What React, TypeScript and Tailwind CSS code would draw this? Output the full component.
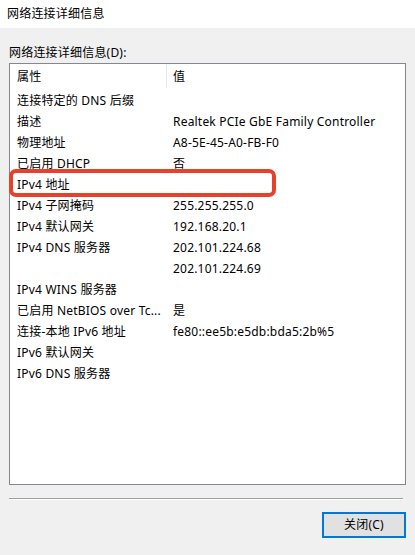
const rows: [string, string][] = [
  ['连接特定的 DNS 后缀', ''],
  ['描述', 'Realtek PCIe GbE Family Controller'],
  ['物理地址', 'A8-5E-45-A0-FB-F0'],
  ['已启用 DHCP', '否'],
  ['IPv4 地址', ''],
  ['IPv4 子网掩码', '255.255.255.0'],
  ['IPv4 默认网关', '192.168.20.1'],
  ['IPv4 DNS 服务器', '202.101.224.68'],
  ['', '202.101.224.69'],
  ['IPv4 WINS 服务器', ''],
  ['已启用 NetBIOS over Tc...', '是'],
  ['连接-本地 IPv6 地址', 'fe80::ee5b:e5db:bda5:2b%5'],
  ['IPv6 默认网关', ''],
  ['IPv6 DNS 服务器', ''],
]

const font = 'font-["Noto_Sans","Noto_Sans_CJK_SC",sans-serif]'

export default function App() {
  return (
    <div className={`w-[415px] h-[555px] bg-[#f0f0f0] flex flex-col text-[12px] tracking-[0.2px] text-black ${font}`}>
      <div className="h-[28px] bg-white flex items-center px-[7px] leading-none">网络连接详细信息</div>
      <div className="flex flex-col px-[9px] pt-[14px]">
        <div className="h-[21px] leading-[21px]">网络连接详细信息(D):</div>
        <div className="relative h-[422px] border border-[#828790] bg-white">
          <div className="flex h-[26px]">
            <div className="w-[156px] pl-[7px] flex items-center">属性</div>
            <div className="w-px h-[24px] bg-[#e5e5e5]" />
            <div className="flex-1 pl-[6px] flex items-center">值</div>
          </div>
          {rows.map(([k, v], i) => (
            <div key={i} className="flex h-[21px] items-center leading-none">
              <div className="w-[156px] pl-[7px] whitespace-nowrap">{k}</div>
              <div className="flex-1 pl-[7px] whitespace-nowrap">{v}</div>
            </div>
          ))}
          <div className="absolute left-[-1px] top-[105px] w-[267px] h-[28px] border-4 border-[#e8402a] rounded-[7px]" />
        </div>
        <div className="mt-[13px] h-px bg-[#a0a0a0] mr-[3px]" />
        <div className="h-px bg-white mr-[3px]" />
        <div className="flex justify-end mt-[12px]">
          <button className="w-[84px] h-[26px] bg-[#e1e1e1] border-2 border-[#0078d7] flex items-center justify-center leading-none">
            关闭(C)
          </button>
        </div>
      </div>
    </div>
  )
}
